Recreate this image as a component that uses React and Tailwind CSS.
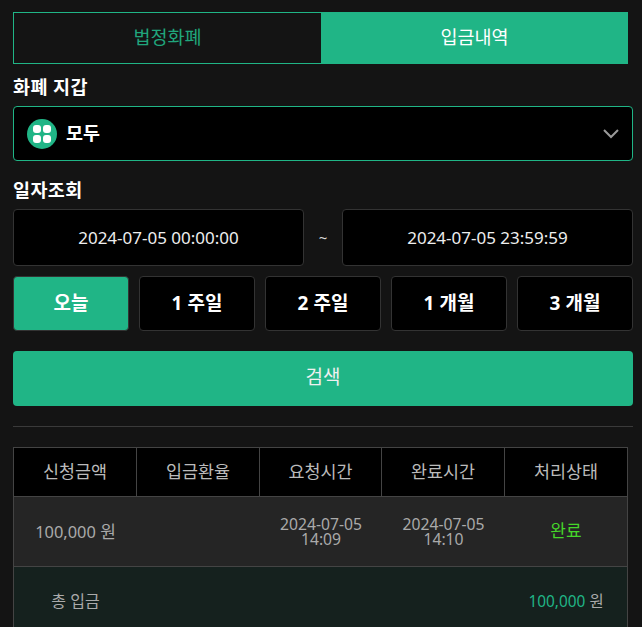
import React from "react";

const periods = ["1 주일", "2 주일", "1 개월", "3 개월"];
const heads = ["신청금액", "입금환율", "요청시간", "완료시간", "처리상태"];
const cols = "grid grid-cols-[123px_123px_122px_123px_122px]";

function App() {
  return (
    <div className="h-[627px] overflow-hidden bg-[#141414] pt-3 pl-[13px] pr-[9px] font-['Noto_Sans','Noto_Sans_CJK_KR',sans-serif] text-white">
      <div className="flex h-[52px] w-[615px]">
        <button className="flex-1 border border-r-0 border-[#20b586] pb-[2px] text-[18.5px] text-[#20a67c]">법정화폐</button>
        <button className="w-[307px] bg-[#20b586] pb-[2px] text-[18.5px] text-white">입금내역</button>
      </div>

      <div className="mt-[11px] h-[23px] text-[18.5px] leading-[24px] tracking-[0.4px] font-bold">화폐 지갑</div>
      <div className="mt-2 flex h-[55px] items-center rounded border border-[#20b586] bg-black px-[13px]">
        <span className="flex h-[30px] w-[30px] items-center justify-center rounded-full bg-[#20b586]">
          <span className="grid grid-cols-2 gap-[2px]">
            <i className="h-[8px] w-[8px] rounded-[3px] bg-white" />
            <i className="h-[8px] w-[8px] rounded-[3px] bg-white" />
            <i className="h-[8px] w-[8px] rounded-[3px] bg-white" />
            <i className="h-[8px] w-[8px] rounded-[3px] bg-white" />
          </span>
        </span>
        <span className="ml-[9px] pb-[1px] text-[18.5px] font-bold">모두</span>
        <svg className="ml-auto" width="16" height="10" viewBox="0 0 16 10" fill="none" stroke="#9a9a9a" strokeWidth="2">
          <path d="M1 1l7 7 7-7" />
        </svg>
      </div>

      <div className="mt-[17px] h-[23px] text-[18.5px] leading-[24px] tracking-[0.4px] font-bold">일자조회</div>
      <div className="mt-2 flex h-[57px] items-center">
        <div className="flex h-full w-[291px] items-center justify-center rounded border border-[#333] bg-black text-[17px] text-[#eee]">2024-07-05 00:00:00</div>
        <div className="flex-1 text-center text-[15px] text-[#ddd]">~</div>
        <div className="flex h-full w-[291px] items-center justify-center rounded border border-[#333] bg-black text-[17px] text-[#eee]">2024-07-05 23:59:59</div>
      </div>

      <div className="mt-[10px] flex h-[55px] gap-[10px]">
        <button className="flex-1 rounded border border-[#333] bg-[#20b586] pb-[1px] text-[19px] font-bold">오늘</button>
        {periods.map((p) => (
          <button key={p} className="flex-1 rounded border border-[#333] bg-black pb-[1px] text-[19px] font-bold">{p}</button>
        ))}
      </div>

      <button className="mt-5 h-[55px] w-full rounded bg-[#20b586] pb-[2px] text-[19px] text-[#f0f0f0]">검색</button>

      <div className="mt-5 h-px bg-[#3a3a3a]" />

      <div className="mt-5 w-[615px] border-x border-t border-[#444]">
        <div className={`${cols} h-[49px] border-b border-[#444] bg-black text-[17.4px] text-[#bbb]`}>
          {heads.map((h, i) => (
            <div key={h} className={i < 4 ? "flex items-center justify-center border-r border-[#444] pb-[2px]" : "flex items-center justify-center pb-[2px]"}>{h}</div>
          ))}
        </div>
        <div className={`${cols} h-[70px] items-center border-b border-[#444] bg-[#252525] text-center text-[16.4px] text-[#aaa]`}>
          <div>100,000 <span className="text-[17px]">원</span></div>
          <div />
          <div className="text-[15.7px] leading-[15px]">2024-07-05<br />14:09</div>
          <div className="text-[15.7px] leading-[15px]">2024-07-05<br />14:10</div>
          <div className="pb-[2px] text-[17px] text-[#45d62a]">완료</div>
        </div>
        <div className={`${cols} h-[70px] items-center bg-[#15211e] text-center text-[15.4px] text-[#aaa]`}>
          <div className="pb-[2px] text-[16px]">총 입금</div>
          <div />
          <div />
          <div />
          <div><span className="text-[#20b586]">100,000</span> 원</div>
        </div>
      </div>
    </div>
  );
}

export default App;
